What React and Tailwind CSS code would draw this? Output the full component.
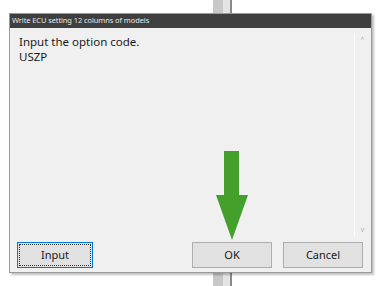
export default function App() {
  return (
    <div className="relative w-[383px] h-[286px] bg-white overflow-hidden" style={{ fontFamily: '"Noto Sans", sans-serif' }}>
      {/* background element behind the dialog */}
      <div className="absolute left-[213px] top-0 w-[19px] h-[286px] flex">
        <div className="w-[10px] h-full bg-[#c8c8c8]" />
        <div className="w-[7px] h-full bg-[#e4e4e4]" />
        <div className="w-[2px] h-full bg-[#8a8a8a]" />
      </div>
      <div className="relative pl-[9px] pt-[13px]">
        <div className="w-[363px] h-[260px] flex flex-col border border-[#9a9a9a] bg-[#f0f0f0] shadow-[2px_2px_2px_rgba(0,0,0,0.25)]">
          <div className="h-[14px] bg-[#3f3f3f] flex items-center pl-[2px] text-[7.5px] leading-none text-[#e8e8e8] tracking-[-0.1px]">
            Write ECU setting 12 columns of models
          </div>
          <div className="relative flex-1 flex">
            <div className="flex-1 pl-[9px] pt-[6px] text-[11.5px] leading-[15px] text-[#1a1a1a]">
              <div>Input the option code.</div>
              <div>USZP</div>
            </div>
            <div className="w-[16px] mr-[1px] mt-[5px] mb-[6px] flex flex-col items-center justify-between border-l border-white text-[7px] text-[#b0b0b0]">
              <span className="mt-[2px]">^</span>
              <span className="mb-[1px]">v</span>
            </div>
            {/* green arrow */}
            <svg className="absolute left-[206px] top-[123px]" width="34" height="90" viewBox="0 0 34 90">
              <rect x="8" y="0" width="15" height="45" fill="#45a02b" />
              <polygon points="0,44 32,44 16,89" fill="#45a02b" />
            </svg>
          </div>
          <div className="h-[30px] flex items-start pl-[7px] pr-[8px]">
            <button className="w-[76px] h-[26px] border border-[#0078d7] bg-[#e1e1e1] p-[1px] text-[11px] text-[#1a1a1a]">
              <div className="w-full h-full border border-dotted border-[#333] flex items-center justify-center">Input</div>
            </button>
            <div className="flex-1" />
            <button className="w-[80px] h-[26px] border border-[#adadad] bg-[#e1e1e1] text-[11px] text-[#1a1a1a] flex items-center justify-center">OK</button>
            <button className="ml-[11px] w-[80px] h-[26px] border border-[#adadad] bg-[#e1e1e1] text-[11px] text-[#1a1a1a] flex items-center justify-center">Cancel</button>
          </div>
        </div>
      </div>
    </div>
  );
}
